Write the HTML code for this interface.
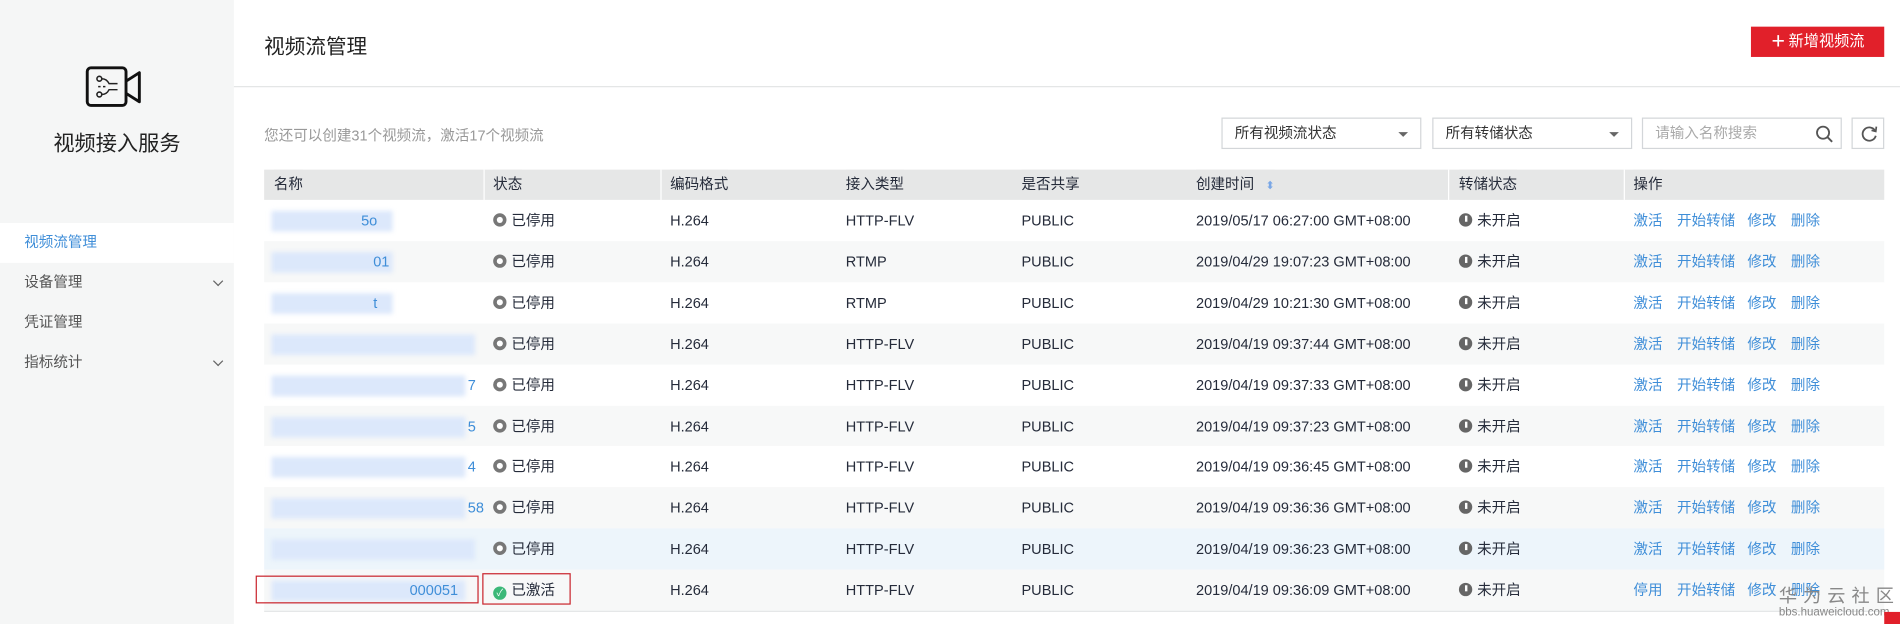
<!DOCTYPE html>
<html><head><meta charset="utf-8"><style>
*{margin:0;padding:0;box-sizing:border-box}
html,body{width:1900px;height:624px;overflow:hidden;background:#fff}
#s{position:absolute;left:0;top:0;width:1568px;height:515px;transform:scale(1.21173);transform-origin:0 0;font-family:"Liberation Sans","Noto Sans CJK SC",sans-serif;font-size:12px;color:#252b3a}
.a{position:absolute}
.side{left:0;top:0;width:193px;height:515px;background:#f5f6f6}
.menu{left:0;width:193px;height:33px;line-height:33px;padding-left:20px;color:#555}
.chev{position:absolute;right:10px;top:12px;width:6px;height:6px;border-right:1.3px solid #666;border-bottom:1.3px solid #666;transform:rotate(45deg)}
.sel{top:97px;height:26px;border:1px solid #d3d6d9;background:#fff;line-height:24px;padding-left:10px;color:#333}
.tri{position:absolute;right:10px;top:11px;border-left:4px solid transparent;border-right:4px solid transparent;border-top:4px solid #666}
.th{top:140px;height:25px;background:#e6e7e7;line-height:25px}
.row{left:218px;width:1337px;height:34px}
.c{position:absolute;line-height:34px;white-space:nowrap}
.lnk{color:#3f8ed8}
.ico{display:inline-block;width:11px;height:11px;border-radius:50%;background:#777;vertical-align:-1px;margin-right:4px;position:relative}
.ico.s::after{content:"";position:absolute;left:3px;top:3px;width:5px;height:5px;border-radius:50%;background:#fff}
.ico.i::after{content:"";position:absolute;left:5px;top:2px;width:1.5px;height:5px;background:#fff}
.blur{position:absolute;background:#dce8fb;filter:blur(2px)}
</style></head><body><div id="s">
<div class="a side"></div>
<svg class="a" style="left:70px;top:54px" width="48" height="36" viewBox="0 0 48 36"><rect x="2" y="2" width="32" height="31" rx="3" fill="none" stroke="#111" stroke-width="2.4"/><path d="M34 13 L45 6 L45 30 L34 23" fill="none" stroke="#111" stroke-width="2.4" stroke-linejoin="round"/><circle cx="12" cy="11" r="2" fill="none" stroke="#222" stroke-width="1.3"/><circle cx="12" cy="24" r="2" fill="none" stroke="#222" stroke-width="1.3"/><path d="M14 11 Q18 11 20 15 L27 15 M14 24 Q18 24 20 20 L27 20 M11 17.5 h2 M15 17.5 h2" fill="none" stroke="#222" stroke-width="1.2"/></svg>
<div class="a" style="left:0;width:193px;top:105px;text-align:center;font-size:17.5px;color:#222">视频接入服务</div>
<div class="a menu" style="top:184px;background:#fff;color:#3f8ed8">视频流管理</div>
<div class="a menu" style="top:217px">设备管理<span class="chev"></span></div>
<div class="a menu" style="top:250px">凭证管理</div>
<div class="a menu" style="top:283px">指标统计<span class="chev"></span></div>

<div class="a" style="left:218px;top:24px;font-size:17px;color:#222">视频流管理</div>
<div class="a" style="left:193px;top:71px;width:1375px;height:1px;background:#e3e5e6"></div>
<div class="a" style="left:1445px;top:22px;width:110px;height:25px;background:#e1202a;color:#fff;line-height:25px;font-size:12.5px;padding-left:17px"><span style="font-size:19px;vertical-align:-2px;margin-right:3px;font-weight:300">+</span>新增视频流</div>
<div class="a" style="left:218px;top:103px;color:#999">您还可以创建31个视频流，激活17个视频流</div>
<div class="a sel" style="left:1008px;width:165px">所有视频流状态<span class="tri"></span></div>
<div class="a sel" style="left:1182px;width:165px">所有转储状态<span class="tri"></span></div>
<div class="a sel" style="left:1355px;width:165px;color:#aaa">请输入名称搜索
<svg style="position:absolute;right:6px;top:5px" width="15" height="15" viewBox="0 0 15 15"><circle cx="6.5" cy="6.5" r="5" fill="none" stroke="#555" stroke-width="1.5"/><path d="M10 10 L14 14" stroke="#555" stroke-width="1.6"/></svg></div>
<div class="a sel" style="left:1528px;width:27px;padding:0"><svg style="position:absolute;left:6px;top:5px" width="15" height="15" viewBox="0 0 15 15"><path d="M12.5 5 A5.5 5.5 0 1 0 13 9" fill="none" stroke="#555" stroke-width="1.5"/><path d="M9.5 4.5 L13 5.5 L13.5 1.5" fill="none" stroke="#555" stroke-width="1.4"/></svg></div>

<div class="a th" style="left:218px;width:1337px"></div>
<div class="a th" style="left:226px">名称</div>
<div class="a" style="left:399px;top:140px;width:1px;height:25px;background:#fff"></div>
<div class="a th" style="left:407px">状态</div>
<div class="a" style="left:545px;top:140px;width:1px;height:25px;background:#fff"></div>
<div class="a th" style="left:553px">编码格式</div>
<div class="a th" style="left:698px">接入类型</div>
<div class="a th" style="left:843px">是否共享</div>
<div class="a th" style="left:987px">创建时间 <span style="color:#7aa7e6;font-size:9px;margin-left:6px">⬍</span></div>
<div class="a" style="left:1195px;top:140px;width:1px;height:25px;background:#fff"></div>
<div class="a th" style="left:1204px">转储状态</div>
<div class="a" style="left:1340px;top:140px;width:1px;height:25px;background:#fff"></div>
<div class="a th" style="left:1348px">操作</div>

<div id="rows"></div>
<div class="a" style="left:218px;top:504px;width:1337px;height:1px;background:#e3e5e6"></div>
<div class="a" style="left:211px;top:475px;width:184px;height:23px;border:1px solid #c9242c"></div>
<div class="a" style="left:398px;top:473px;width:73px;height:26px;border:1px solid #c9242c"></div>
<div class="a" style="left:1468px;top:481px;font-size:15px;color:#888;letter-spacing:5px">华为云社区</div>
<div class="a" style="left:1468px;top:500px;font-size:9.5px;color:#888">bbs.huaweicloud.com</div>
<div class="a" style="left:1555px;top:505px;width:13px;height:10px;background:#e1202a"></div>
</div>
<script>
var t=["2019/05/17 06:27:00","2019/04/29 19:07:23","2019/04/29 10:21:30","2019/04/19 09:37:44","2019/04/19 09:37:33","2019/04/19 09:37:23","2019/04/19 09:36:45","2019/04/19 09:36:36","2019/04/19 09:36:23","2019/04/19 09:36:09"];
var ty=["HTTP-FLV","RTMP","RTMP","HTTP-FLV","HTTP-FLV","HTTP-FLV","HTTP-FLV","HTTP-FLV","HTTP-FLV","HTTP-FLV"];
var nm=["5o","01","t","","7","5","4","58","","000051"];
var h="";
for(var i=0;i<10;i++){var y=165+i*33.9;var bg=i==8?"#edf5fb":(i%2?"#f7f8f8":"#fff");
var last=i==9;
h+='<div class="a row" style="top:'+y+'px;background:'+bg+'">'+
'<div class="blur" style="left:6px;top:9px;width:'+(nm[i]?(i<3?100:160):168)+'px;height:17px"></div>'+
'<div class="c lnk" style="left:'+(nm[i].length>3?120:(i==0?80:(i<3?90:168)))+'px">'+nm[i]+'</div>'+
'<div class="c" style="left:189px">'+(last?'<span class="ico" style="background:#3cb878;color:#fff;font-size:8px;text-align:center;line-height:11px">✓</span>已激活':'<span class="ico s"></span>已停用')+'</div>'+
'<div class="c" style="left:335px">H.264</div>'+
'<div class="c" style="left:480px">'+ty[i]+'</div>'+
'<div class="c" style="left:625px">PUBLIC</div>'+
'<div class="c" style="left:769px">'+t[i]+' GMT+08:00</div>'+
'<div class="c" style="left:986px"><span class="ico i" style="background:#666"></span>未开启</div>'+
'<div class="c lnk" style="left:1130px">'+(last?'停用':'激活')+'</div>'+
'<div class="c lnk" style="left:1166px">开始转储</div>'+
'<div class="c lnk" style="left:1224px">修改</div>'+
'<div class="c lnk" style="left:1260px">删除</div></div>';}
document.getElementById("rows").innerHTML=h;
</script>
</body></html>
